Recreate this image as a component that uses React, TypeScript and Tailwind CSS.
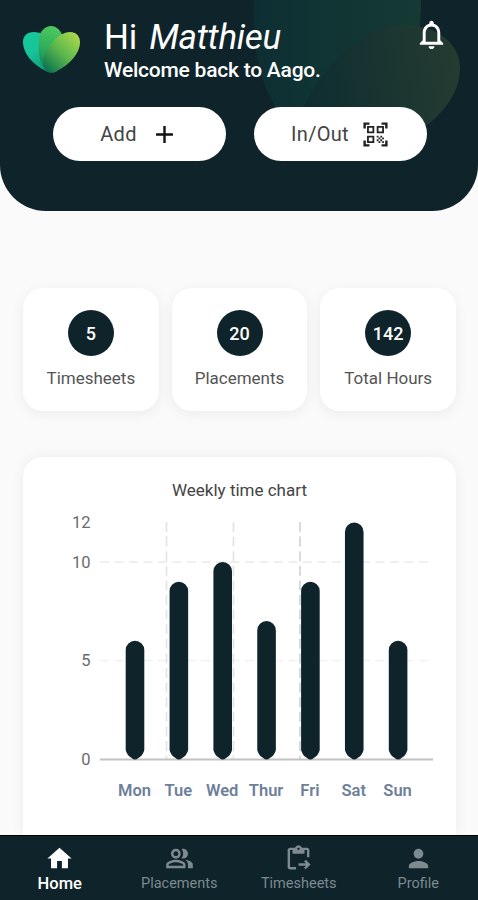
import {
  MdAdd,
  MdHome,
  MdNotificationsNone,
  MdOutlineContentPasteGo,
  MdPerson,
  MdQrCodeScanner,
} from "react-icons/md";

const stats = [
  { label: "Timesheets", value: 5 },
  { label: "Placements", value: 20 },
  { label: "Total Hours", value: 142 },
];

const week = [
  { day: "Mon", hours: 6 },
  { day: "Tue", hours: 9 },
  { day: "Wed", hours: 10 },
  { day: "Thur", hours: 7 },
  { day: "Fri", hours: 9 },
  { day: "Sat", hours: 12 },
  { day: "Sun", hours: 6 },
];

const Logo = () => (
  <svg width="57" height="47" viewBox="0 0 57 47" className="shrink-0">
    <defs>
      <linearGradient id="petalLeft" x1="0" y1="0" x2="0.6" y2="1">
        <stop offset="0" stopColor="#14c99c" />
        <stop offset="0.5" stopColor="#18c49a" />
        <stop offset="1" stopColor="#0f9a78" />
      </linearGradient>
      <linearGradient id="petalMid" x1="0.6" y1="0" x2="0.4" y2="1">
        <stop offset="0" stopColor="#4fca5e" />
        <stop offset="0.5" stopColor="#2fae5c" />
        <stop offset="1" stopColor="#0f7f58" />
      </linearGradient>
      <linearGradient id="petalRight" x1="0.95" y1="0.1" x2="0.15" y2="1">
        <stop offset="0" stopColor="#a8d84c" />
        <stop offset="0.5" stopColor="#5cb84c" />
        <stop offset="1" stopColor="#0b7350" />
      </linearGradient>
    </defs>
    <path
      d="M11 6C4 6 0 10 0 16C0 27 10 39 23 45C30 47 35 42 33 32C31 20 24 6 11 6Z"
      fill="url(#petalLeft)"
    />
    <path
      d="M28 0C22 0 17 5 16 12C15 24 16 38 23 45C27 47 31 47 34 45C40 38 42 24 40 11C38 5 34 0 28 0Z"
      fill="url(#petalMid)"
    />
    <path
      d="M47 6C41 6 34 10 29 17C22 26 17 36 23 45C26 47 31 47 34 45C46 39 57 28 57 16C57 10 53 6 47 6Z"
      fill="url(#petalRight)"
    />
  </svg>
);

const HeaderShapes = () => (
  <svg className="absolute inset-0" width="478" height="211">
    <defs>
      <linearGradient id="shapeBack" x1="0" y1="0" x2="1" y2="0">
        <stop offset="0" stopColor="#0d2f33" />
        <stop offset="1" stopColor="#153a34" />
      </linearGradient>
      <linearGradient id="shapeFront" x1="0" y1="0.5" x2="1" y2="0.4">
        <stop offset="0" stopColor="#0e2d31" />
        <stop offset="0.5" stopColor="#193431" />
        <stop offset="1" stopColor="#243b31" />
      </linearGradient>
    </defs>
    <path
      d="M254 0C252 50 260 100 300 140H370C405 105 421 50 421 0Z"
      fill="url(#shapeBack)"
    />
    <path
      d="M415 26C380 20 345 45 320 80C305 100 295 120 300 140H405C440 120 460 95 460 68C460 45 440 29 415 26Z"
      fill="url(#shapeFront)"
    />
  </svg>
);

const PeopleIcon = ({ size }: { size: number }) => (
  <svg width={size} height={size} viewBox="0 0 24 24" fill="currentColor">
    <path d="M9 12c2.21 0 4-1.79 4-4s-1.79-4-4-4-4 1.79-4 4 1.79 4 4 4zm0-6c1.1 0 2 .9 2 2s-.9 2-2 2-2-.9-2-2 .9-2 2-2z" />
    <path d="M9 13c-2.67 0-8 1.34-8 4v3h16v-3c0-2.66-5.33-4-8-4zm6 5H3v-.99C3.2 16.29 6.3 15 9 15s5.8 1.29 6 2v1z" />
    <path d="M15 12c2.21 0 4-1.79 4-4s-1.79-4-4-4c-.47 0-.91.1-1.33.24C14.5 5.27 15 6.58 15 8s-.5 2.73-1.33 3.76c.42.14.86.24 1.33.24z" />
    <path d="M16.67 13.13C18.04 14.06 19 15.32 19 17v3h4v-3c0-2.18-3.57-3.47-6.33-3.87z" />
  </svg>
);

const y = (v: number) => 238 - v * 19.7;

// round on top, slightly pointed where it meets the axis
const barPath = (x: number, top: number) =>
  `M${x} ${top + 9.3}a9.3 9.3 0 0 1 18.6 0V229q-1 5 -6 8q-3.3 3 -6.6 0q-5 -3 -6 -8Z`;

const Chart = () => (
  <svg width="433" height="300" className="overflow-visible font-[Roboto]">
    {[5, 10].map((v) => (
      <line
        key={v}
        x1="77"
        x2="410"
        y1={y(v)}
        y2={y(v)}
        stroke={v === 5 ? "#f0f2f2" : "#e9ecec"}
        strokeWidth="1.5"
        strokeDasharray="9 5.5"
      />
    ))}
    {[143.5, 210.5, 277].map((x) => (
      <line
        key={x}
        x1={x}
        x2={x}
        y1="1"
        y2="238"
        stroke={x === 277 ? "#ccd3d5" : "#dfe4e4"}
        strokeWidth="1.6"
        strokeDasharray="10 4.6"
      />
    ))}
    <line x1="77" x2="410" y1="238.5" y2="238.5" stroke="#c2c2c2" strokeWidth="2" />
    {[0, 5, 10, 12].map((v) => (
      <text
        key={v}
        x="67.5"
        y={y(v) + 5.5}
        textAnchor="end"
        fontSize="16.5"
        fill="#6b6b6b"
      >
        {v}
      </text>
    ))}
    {week.map((d, i) => (
      <g key={d.day}>
        <path d={barPath(102.7 + i * 43.85, y(d.hours))} fill="#0f242a" />
        <text
          x={111.5 + i * 43.85}
          y="274.5"
          textAnchor="middle"
          fontSize="16.5"
          fontWeight="600"
          fill="#6d7f9a"
        >
          {d.day}
        </text>
      </g>
    ))}
  </svg>
);

const tabs = [
  { label: "Home", icon: MdHome },
  { label: "Placements", icon: PeopleIcon },
  { label: "Timesheets", icon: MdOutlineContentPasteGo },
  { label: "Profile", icon: MdPerson },
];

export default function App() {
  return (
    <div className="flex h-[900px] w-[478px] flex-col overflow-hidden bg-[#fafafa] font-[Roboto,sans-serif]">
      <header className="relative h-[211px] shrink-0 overflow-hidden rounded-b-[46px] bg-[#0f232a]">
        <HeaderShapes />
        <div className="relative flex pt-[17px] pl-[23px] text-white">
          <div className="pt-[9px]">
            <Logo />
          </div>
          <div className="ml-6 flex-1">
            <h1 className="text-[35px] leading-[41px] tracking-[-0.3px] whitespace-pre">
              Hi <i className="ml-1">Matthieu</i>
            </h1>
            <p className="text-[21px] leading-6 font-medium tracking-[-0.23px]">
              Welcome back to Aago.
            </p>
          </div>
          <MdNotificationsNone className="mr-[29px]" size={35} />
        </div>
        <div className="relative mt-[25px] flex gap-7 pr-[51px] pl-[53px]">
          <button className="flex h-[54px] flex-1 items-center justify-center gap-[13px] rounded-full bg-white text-[20px] tracking-[0.3px] text-[#444]">
            Add
            <MdAdd size={29} className="text-[#111]" />
          </button>
          <button className="flex h-[54px] flex-1 items-center justify-center gap-3 rounded-full bg-white text-[20px] tracking-[0.3px] text-[#444]">
            In/Out
            <MdQrCodeScanner size={29} className="text-[#222]" />
          </button>
        </div>
      </header>

      <section className="mt-[77px] flex shrink-0 gap-[13px] pr-[22px] pl-[23px]">
        {stats.map((s) => (
          <div
            key={s.label}
            className="flex h-[123px] flex-1 flex-col items-center rounded-[20px] bg-white pt-[22px] shadow-[0_3px_14px_rgba(0,0,0,0.06)]"
          >
            <div className="flex size-[46px] items-center justify-center rounded-full bg-[#0f242a] text-[18px] font-medium text-white">
              {s.value}
            </div>
            <p className="mt-[10px] text-[17px] leading-6 text-[#555]">
              {s.label}
            </p>
          </div>
        ))}
      </section>

      <section className="mr-[22px] ml-[23px] mt-[46px] flex-1 overflow-hidden rounded-t-[20px] bg-white pt-[21px] shadow-[0_0_14px_rgba(0,0,0,0.06)]">
        <h2 className="text-center text-[17px] leading-6 text-[#444]">
          Weekly time chart
        </h2>
        <div className="mt-[19px]">
          <Chart />
        </div>
      </section>

      <nav className="z-10 flex h-[65px] shrink-0 border-t border-black bg-[#0f232a]">
        {tabs.map(({ label, icon: Icon }, i) => (
          <div
            key={label}
            className={
              i === 0
                ? "flex flex-1 flex-col items-center pt-2 text-[16.5px] font-medium text-white"
                : "flex flex-1 flex-col items-center pt-2 text-[14.5px] text-[#7d8a90]"
            }
          >
            <Icon size={29} />
            <span className="mt-px leading-5">{label}</span>
          </div>
        ))}
      </nav>
    </div>
  );
}
